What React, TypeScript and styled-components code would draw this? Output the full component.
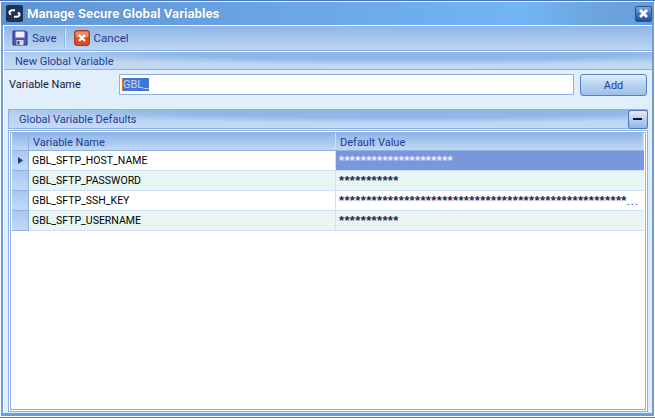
import styled, { createGlobalStyle } from 'styled-components'

const rows = [
  { name: 'GBL_SFTP_HOST_NAME', value: '*'.repeat(21), selected: true },
  { name: 'GBL_SFTP_PASSWORD', value: '*'.repeat(11) },
  { name: 'GBL_SFTP_SSH_KEY', value: '*'.repeat(53), clipped: true },
  { name: 'GBL_SFTP_USERNAME', value: '*'.repeat(11) },
]

export default function App() {
  return (
    <Window>
      <GlobalStyle />
      <TitleBar>
        <Logo>
          <svg width="17" height="17" viewBox="0 0 17 17">
            <rect width="17" height="17" rx="2" fill="#1c3258" />
            <path d="M9 5.2 H6.2 a3 2.2 0 0 0 -1 4.2" fill="none" stroke="#fff" strokeWidth="2" />
            <path d="M8 11.8 H10.8 a3 2.2 0 0 0 1 -4.2" fill="none" stroke="#fff" strokeWidth="2" />
          </svg>
        </Logo>
        <Title>Manage Secure Global Variables</Title>
        <CloseButton>
          <svg width="11" height="11" viewBox="0 0 11 11">
            <path d="M2 2 L9 9 M9 2 L2 9" stroke="#fff" strokeWidth="2.8" />
          </svg>
        </CloseButton>
      </TitleBar>
      <Body>
        <Toolbar>
          <ToolButton>
            <svg width="16" height="16" viewBox="0 0 16 16">
              <path d="M1 1 H13.5 L15 2.5 V15 H1 Z" fill="#4f55b8" stroke="#2c2f86" />
              <rect x="3.5" y="1.5" width="9" height="6" fill="#eef1fb" />
              <rect x="4.5" y="10" width="7" height="5" fill="#d9dbe6" />
              <rect x="5.5" y="11" width="2" height="3.5" fill="#333a6a" />
            </svg>
            Save
          </ToolButton>
          <ToolDivider />
          <ToolButton>
            <svg width="16" height="16" viewBox="0 0 16 16">
              <rect x="0.5" y="0.5" width="15" height="15" rx="2.5" fill="#dc4a22" stroke="#a83a20" />
              <rect x="1.5" y="1.5" width="13" height="6" rx="2" fill="#ee8a68" />
              <path d="M5 5 L11 11 M11 5 L5 11" stroke="#fff" strokeWidth="2.4" />
            </svg>
            Cancel
          </ToolButton>
        </Toolbar>
        <SectionHead>New Global Variable</SectionHead>
        <FormRow>
          <FieldLabel>Variable Name</FieldLabel>
          <FakeInput>
            <Caret />
            <Selected>GBL_</Selected>
          </FakeInput>
          <AddButton>Add</AddButton>
        </FormRow>
        <Group>
          <GroupHead>
            Global Variable Defaults
            <MinusButton>
              <svg width="10" height="4" viewBox="0 0 10 4">
                <rect width="9" height="2" y="1" fill="#0c1830" />
              </svg>
            </MinusButton>
          </GroupHead>
          <GridFrame>
            <Grid>
              <HeaderRow>
                <Indicator $header />
                <HeaderCell>Variable Name</HeaderCell>
                <HeaderCell>Default Value</HeaderCell>
              </HeaderRow>
              {rows.map((row, i) => (
                <Row key={row.name} $alt={i % 2 === 1}>
                  <Indicator>
                    {row.selected && (
                      <svg width="5" height="7" viewBox="0 0 5 7">
                        <path d="M0 0 L5 3.5 L0 7 Z" fill="#1c3a7c" />
                      </svg>
                    )}
                  </Indicator>
                  <NameCell>{row.name}</NameCell>
                  <ValueCell $selected={row.selected}>
                    <Stars>{row.value}</Stars>
                    {row.clipped && <Clip>...</Clip>}
                  </ValueCell>
                </Row>
              ))}
            </Grid>
          </GridFrame>
        </Group>
      </Body>
    </Window>
  )
}

const GlobalStyle = createGlobalStyle`
  html, body {
    margin: 0;
    padding: 0;
  }
  body {
    font-family: Roboto, "Liberation Sans", Arial, sans-serif;
    font-size: 11px;
  }
`

const Window = styled.div`
  box-sizing: border-box;
  width: 655px;
  height: 418px;
  display: flex;
  flex-direction: column;
  background: #6a9fdc;
  border-top: 1px solid #4a76b8;
  border-bottom: 1px solid #4a76b8;
  padding: 0 1px 1px 1px;
  box-shadow: inset 1px 0 0 #fff, inset -1px 0 0 #fff, inset 0 -1px 0 #fff;
`

const TitleBar = styled.div`
  height: 23px;
  flex: none;
  display: flex;
  align-items: center;
  padding: 0 2px 0 5px;
  border-top: 1px solid #e8f1fb;
  background: linear-gradient(90deg, #6095d2 0%, #6ba6e6 45%, #72b5f5 80%, #6ca6df 90%, #679ed6 100%);
`

const Logo = styled.div`
  width: 17px;
  height: 17px;
  display: flex;
`

const Title = styled.div`
  flex: 1;
  margin-left: 4px;
  color: #fff;
  font-size: 13.2px;
  font-weight: bold;
  text-shadow: 0 0 1px #3c6aa8;
`

const CloseButton = styled.div`
  box-sizing: border-box;
  width: 17px;
  height: 16px;
  display: flex;
  align-items: center;
  justify-content: center;
  border-radius: 2px;
  background: linear-gradient(180deg, #7fa9de 0%, #3f72bc 50%, #1f4c9a 100%);
  border: 1px solid #2b5296;
`

const Body = styled.div`
  flex: 1;
  min-height: 0;
  display: flex;
  flex-direction: column;
  margin: 0 2px 3px 2px;
  background: #e1effd;
  border-top: 1px solid #fff;
  border-left: 1px solid #fff;
`

const Toolbar = styled.div`
  box-sizing: border-box;
  height: 25px;
  flex: none;
  display: flex;
  align-items: center;
  padding-left: 8px;
  background: linear-gradient(180deg, #8fb5e6 0%, #bcd6f3 100%);
  border-bottom: 1px solid #86acdd;
`

const ToolButton = styled.div`
  display: flex;
  align-items: center;
  gap: 4px;
  color: #1d3a96;
  font-size: 11.5px;
  line-height: 12px;
  padding-bottom: 1px;
`

const ToolDivider = styled.div`
  width: 1px;
  height: 18px;
  margin: 0 8px 0 7px;
  background: #dbe9f9;
  border-left: 1px solid #8eb1de;
`

const SectionHead = styled.div`
  box-sizing: border-box;
  height: 19px;
  flex: none;
  display: flex;
  align-items: center;
  padding: 1px 0 0 11px;
  color: #1d3a96;
  border-top: 1px solid #fff;
  border-bottom: 1px solid #8cb1e2;
  background:
    radial-gradient(ellipse 420px 13px at 62% 0%, #8fb6e6 55%, transparent 100%),
    linear-gradient(180deg, #b3cff0 0%, #c3daf5 100%);
`

const FormRow = styled.div`
  box-sizing: border-box;
  height: 28px;
  flex: none;
  display: flex;
  align-items: flex-start;
  padding: 4px 3px 0 5px;
`

const FieldLabel = styled.div`
  width: 110px;
  line-height: 22px;
  color: #10203a;
`

const FakeInput = styled.div`
  box-sizing: border-box;
  width: 455px;
  height: 21px;
  display: flex;
  align-items: center;
  padding-left: 2px;
  background: #fff;
  border: 1px solid #8fb0dd;
`

const Caret = styled.span`
  width: 1px;
  height: 13px;
  background: #d8762a;
`

const Selected = styled.span`
  height: 13px;
  line-height: 13px;
  padding-right: 1px;
  color: #c4d6f3;
  background: #3f78d4;
`

const AddButton = styled.div`
  box-sizing: border-box;
  width: 67px;
  height: 22px;
  margin-left: 6px;
  display: flex;
  align-items: center;
  justify-content: center;
  color: #1d3a96;
  border: 1px solid #5b80c0;
  border-radius: 3px;
  background: linear-gradient(180deg, #e2eefb 0%, #bcd4f2 45%, #9fbfe9 100%);
`

const Group = styled.div`
  flex: 1;
  min-height: 0;
  display: flex;
  flex-direction: column;
  margin: 11px 4px 1px 4px;
`

const GroupHead = styled.div`
  box-sizing: border-box;
  height: 20px;
  flex: none;
  display: flex;
  align-items: center;
  justify-content: space-between;
  padding: 1px 0 0 10px;
  color: #1d3a96;
  border: 1px solid #8cb1e2;
  border-right: none;
  background:
    radial-gradient(ellipse 420px 13px at 62% 0%, #8fb6e6 55%, transparent 100%),
    linear-gradient(180deg, #b3cff0 0%, #c3daf5 100%);
`

const MinusButton = styled.div`
  box-sizing: border-box;
  width: 20px;
  height: 19px;
  margin-top: -1px;
  display: flex;
  align-items: center;
  justify-content: center;
  border: 1px solid #4f75b4;
  border-radius: 3px;
  background: linear-gradient(180deg, #dfecfb 0%, #b5cff0 50%, #93b6e6 100%);
`

const GridFrame = styled.div`
  flex: 1;
  min-height: 0;
  margin-top: 1px;
  background: #fff;
  border: 1px solid #8cb1e2;
  padding: 1px;
  display: flex;
`

const Grid = styled.div`
  flex: 1;
  background: #fff;
  border: 1px solid #8cb1e2;
  padding: 0 1px;
`

const HeaderRow = styled.div`
  display: grid;
  grid-template-columns: 17px 307px 308px;
  height: 17px;
  border-bottom: 1px solid #8cb1e2;
`

const Row = styled.div<{ $alt?: boolean }>`
  display: grid;
  grid-template-columns: 17px 307px 308px;
  height: 19px;
  background: ${p => (p.$alt ? '#e8f5f3' : '#fff')};
  border-bottom: 1px solid #cfe1f7;
`

const Indicator = styled.div<{ $header?: boolean }>`
  display: flex;
  align-items: center;
  justify-content: center;
  border-right: 1px solid #8cb1e2;
  background: ${p =>
    p.$header ? 'linear-gradient(180deg, #8fb5e6 0%, #c0d8f4 100%)' : 'linear-gradient(180deg, #a9c8ee 0%, #c2d9f4 100%)'};
  border-bottom: ${p => (p.$header ? 'none' : '1px solid #8cb1e2')};
  margin-bottom: ${p => (p.$header ? '0' : '-1px')};
`

const HeaderCell = styled.div`
  display: flex;
  align-items: center;
  padding: 1px 0 0 4px;
  color: #1d3a96;
  border-right: 1px solid #cfe1f7;
  background: linear-gradient(180deg, #8fb5e6 0%, #c0d8f4 100%);
`

const NameCell = styled.div`
  padding: 3px 0 0 3px;
  color: #000;
  font-size: 10.5px;
  border-right: 1px solid #cfe1f7;
  white-space: nowrap;
`

const ValueCell = styled.div<{ $selected?: boolean }>`
  position: relative;
  padding: 2px 0 0 3px;
  overflow: hidden;
  white-space: nowrap;
  color: ${p => (p.$selected ? '#efe8f6' : '#1c2c55')};
  background: ${p => (p.$selected ? '#7a97de' : 'transparent')};
`

const Stars = styled.span`
  font-family: "Liberation Sans", Arial, sans-serif;
  font-size: 13px;
  font-weight: bold;
  letter-spacing: 0.37px;
`

const Clip = styled.span`
  font-size: 11px;
  letter-spacing: 1.2px;
  color: #2a1a8a;
`
